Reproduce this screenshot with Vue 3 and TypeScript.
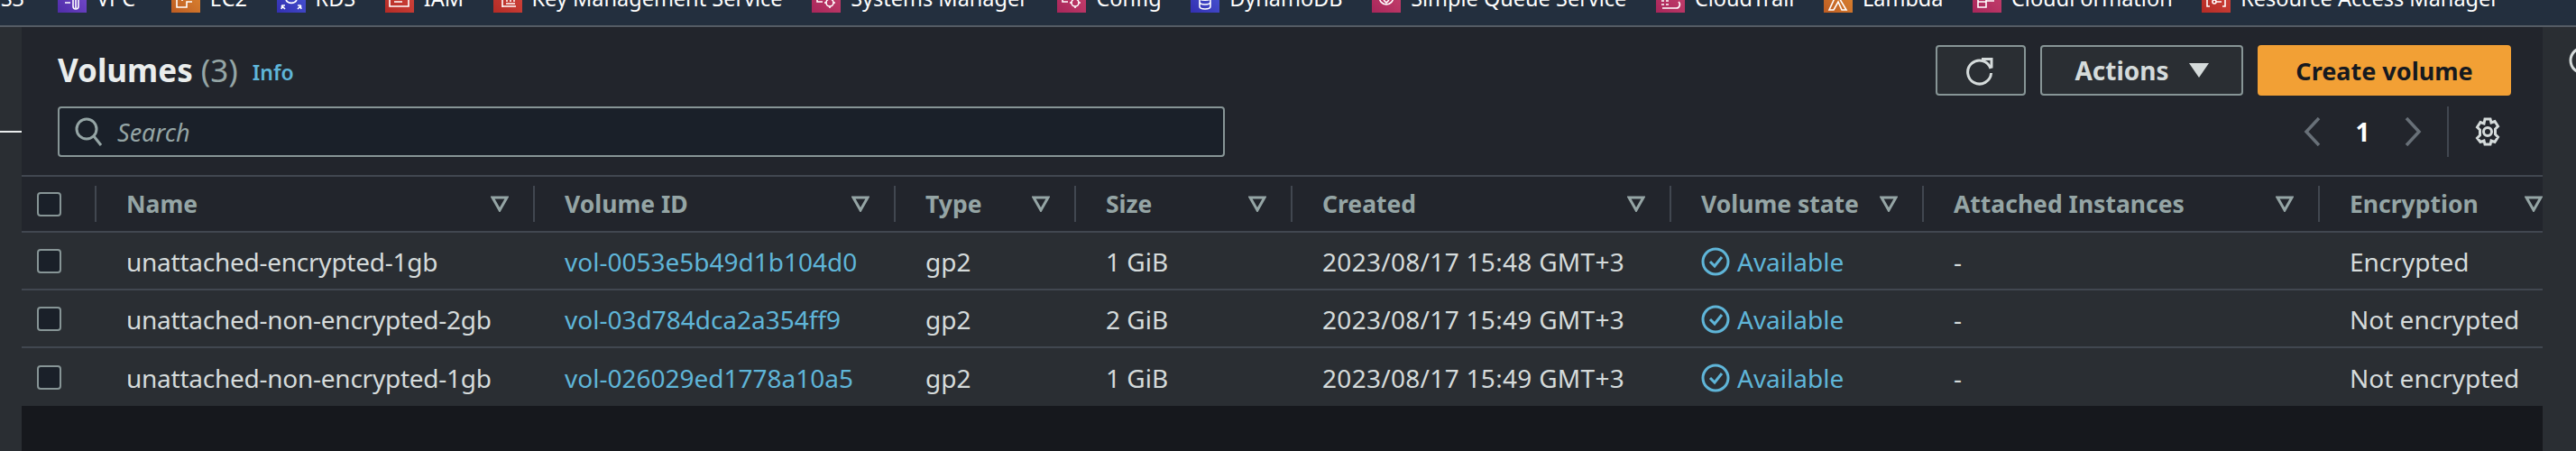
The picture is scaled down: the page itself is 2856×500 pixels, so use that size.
<script setup lang="ts">
interface Service {
  name: string
  color: string
  icon: string
}
interface Column {
  label: string
  width: number
}
interface Volume {
  name: string
  id: string
  type: string
  size: string
  created: string
  encryption: string
}

const purple = 'linear-gradient(45deg, #4f2ca8, #7a4fd0)'
const orange = 'linear-gradient(45deg, #bd5c22, #e08a32)'
const blue = 'linear-gradient(45deg, #332fb0, #4a5ad8)'
const red = 'linear-gradient(45deg, #b52b25, #d4483f)'
const pink = 'linear-gradient(45deg, #a8265a, #c9436f)'

// only the lower part of every tile shows under the top edge
const services: Service[] = [
  { name: 'VPC', color: purple, icon: 'M8 21h6M17 14v11a3 3 0 0 0 6 0V14M20 14v13' },
  { name: 'EC2', color: orange, icon: 'M6 14v12h11v-6h6M12 14v5M17 14v2' },
  { name: 'RDS', color: blue, icon: 'M5 24l4 4M5 28l1-4h3M27 24l-4 4M27 28l-1-4h-3M10 18a7 7 0 0 0 12 0' },
  { name: 'IAM', color: red, icon: 'M5 14v11h21V14M10 20h9' },
  { name: 'Key Management Service', color: red, icon: 'M10 14v12M10 25h15M14 19h2M18 19h2M22 19h2M14 22h10' },
  { name: 'Systems Manager', color: pink, icon: 'M6 14v6h6M16 21a4 4 0 1 0 8 0 4 4 0 1 0-8 0M20 15v2M20 25v2M14 21h2M24 21h2' },
  { name: 'Config', color: pink, icon: 'M6 14v6h6M16 21a4 4 0 1 0 8 0 4 4 0 1 0-8 0M20 15v2M20 25v2M14 21h2M24 21h2' },
  { name: 'DynamoDB', color: blue, icon: 'M10 14v11c0 4 12 4 12 0V14M10 20c0 4 12 4 12 0M10 16c0 3 12 3 12 0' },
  { name: 'Simple Queue Service', color: pink, icon: 'M8 14a8 9 0 0 0 16 0M13 18l3 3 3-3' },
  { name: 'CloudTrail', color: pink, icon: 'M6 19h3M11 19h3M6 23h3M11 23h3M7 27h15a4 4 0 0 0 3-7' },
  { name: 'Lambda', color: orange, icon: 'M13 14l-7 15h5l5-9 4 9h5L16 14' },
  { name: 'CloudFormation', color: pink, icon: 'M6 14v12h9V14M6 20h9M15 19h9M19 14h5' },
  { name: 'Resource Access Manager', color: red, icon: 'M6 14v11h3M26 14v11h-3M12 20a2 2 0 1 0 4 0 2 2 0 1 0-4 0M16 20h6' },
]

const columns: Column[] = [
  { label: 'Name', width: 486 },
  { label: 'Volume ID', width: 400 },
  { label: 'Type', width: 200 },
  { label: 'Size', width: 240 },
  { label: 'Created', width: 420 },
  { label: 'Volume state', width: 280 },
  { label: 'Attached Instances', width: 439 },
  { label: 'Encryption', width: 247 },
]

const gridColumns = `83px ${columns.map((c) => `${c.width}px`).join(' ')}`

const volumes: Volume[] = [
  { name: 'unattached-encrypted-1gb', id: 'vol-0053e5b49d1b104d0', type: 'gp2', size: '1 GiB', created: '2023/08/17 15:48 GMT+3', encryption: 'Encrypted' },
  { name: 'unattached-non-encrypted-2gb', id: 'vol-03d784dca2a354ff9', type: 'gp2', size: '2 GiB', created: '2023/08/17 15:49 GMT+3', encryption: 'Not encrypted' },
  { name: 'unattached-non-encrypted-1gb', id: 'vol-026029ed1778a10a5', type: 'gp2', size: '1 GiB', created: '2023/08/17 15:49 GMT+3', encryption: 'Not encrypted' },
]
</script>

<template>
  <div class="page">
    <nav class="topbar">
      <span class="service-name first">S3</span>
      <a v-for="s in services" :key="s.name" class="service">
        <span class="tile" :style="{ background: s.color }">
          <svg viewBox="0 0 32 32" width="32" height="32" fill="none" stroke="#fff" stroke-width="1.6">
            <path :d="s.icon" />
          </svg>
        </span>
        <span class="service-name">{{ s.name }}</span>
      </a>
    </nav>

    <div class="body">
      <aside class="strip">
        <span class="strip-mark"></span>
      </aside>

      <main class="main">
        <section class="panel">
          <header class="head">
            <div class="head-row">
              <h1 class="title">Volumes <span class="count">(3)</span></h1>
              <a class="info">Info</a>
              <div class="actions">
                <button class="btn refresh" aria-label="Refresh">
                  <svg viewBox="0 0 34 34" width="34" height="34" fill="none" stroke="#d5dbdb" stroke-width="3">
                    <path d="M28 15a13 13 0 1 0 .6 5" />
                    <path d="M18 4.500h11v10" />
                  </svg>
                </button>
                <button class="btn menu">
                  Actions
                  <svg viewBox="0 0 22 16" width="22" height="16"><path d="M0 0h22L11 16z" fill="#d5dbdb" /></svg>
                </button>
                <button class="btn primary">Create volume</button>
              </div>
            </div>
            <div class="head-row">
              <label class="search">
                <svg viewBox="0 0 32 34" width="32" height="34" fill="none" stroke="#95a5a5" stroke-width="3">
                  <circle cx="14" cy="14" r="11" />
                  <path d="M22 22l8 10" />
                </svg>
                <span class="placeholder">Search</span>
              </label>
              <div class="pager">
                <svg viewBox="0 0 20 32" width="20" height="32" fill="none" stroke="#687078" stroke-width="3.5">
                  <path d="M17 1L3 16l14 15" />
                </svg>
                <span class="page-num">1</span>
                <svg viewBox="0 0 20 32" width="20" height="32" fill="none" stroke="#687078" stroke-width="3.5">
                  <path d="M3 1l14 15L3 31" />
                </svg>
                <span class="pager-sep"></span>
                <svg class="gear" viewBox="0 0 32 32" width="32" height="32" fill="none" stroke="#d5dbdb" stroke-width="3">
                  <circle cx="16" cy="16" r="4.500" />
                  <path d="M13 2h6l1 4 4-1.500 3.500 5.500-3 3v6l3 3-3.500 5.500-4-1.500-1 4h-6l-1-4-4 1.500L4.500 23l3-3v-6l-3-3L8 5.500 12 7z" />
                </svg>
              </div>
            </div>
          </header>

          <div class="grid head-cells" :style="{ gridTemplateColumns: gridColumns }">
            <div class="cell check-cell"><span class="checkbox"></span></div>
            <div v-for="c in columns" :key="c.label" class="cell th">
              <span>{{ c.label }}</span>
              <svg viewBox="0 0 20 18" width="20" height="18" fill="none" stroke="#95a5a5" stroke-width="3">
                <path d="M2 2h16l-8 14z" />
              </svg>
            </div>
          </div>

          <div v-for="v in volumes" :key="v.id" class="grid row" :style="{ gridTemplateColumns: gridColumns }">
            <div class="cell check-cell"><span class="checkbox"></span></div>
            <div class="cell name">{{ v.name }}</div>
            <div class="cell link">{{ v.id }}</div>
            <div class="cell">{{ v.type }}</div>
            <div class="cell">{{ v.size }}</div>
            <div class="cell date">{{ v.created }}</div>
            <div class="cell link state">
              <svg viewBox="0 0 32 32" width="32" height="32" fill="none" stroke="#5fb5d8" stroke-width="3">
                <circle cx="16" cy="16" r="14" />
                <path d="M10 16l5 5 8-10" />
              </svg>
              Available
            </div>
            <div class="cell">-</div>
            <div class="cell">{{ v.encryption }}</div>
          </div>
        </section>
      </main>

      <aside class="strip right">
        <svg class="help" viewBox="0 0 32 32" width="32" height="32" fill="none" stroke="#d5dbdb" stroke-width="3">
          <circle cx="16" cy="16" r="14" />
        </svg>
      </aside>
    </div>
  </div>
</template>

<style>
html,
body {
  margin: 0;
  background: #16181d;
}
</style>

<style scoped>
.page {
  width: 2856px;
  height: 500px;
  overflow: hidden;
  display: flex;
  flex-direction: column;
  font-family: "Noto Sans", "Open Sans", sans-serif;
  font-size: 28px;
  color: #d5dbdb;
  background: #16181d;
}
.topbar {
  flex: none;
  height: 28px;
  box-sizing: border-box;
  padding: 0 0 14px 64px;
  display: flex;
  align-items: flex-end;
  gap: 32.500px;
  background: #232f3e;
  position: relative;
  overflow: hidden;
  white-space: nowrap;
  font-size: 23.500px;
}
.service {
  display: flex;
  align-items: center;
  gap: 11px;
  height: 32px;
  flex: none;
}
.service:first-of-type {
  margin-right: 7px;
}
.tile {
  flex: none;
  width: 32px;
  height: 32px;
  display: block;
}
.tile svg {
  display: block;
}
.service-name {
  color: #fff;
}
.service-name.first {
  position: absolute;
  right: calc(100% - 27px);
  bottom: 14px;
}
.body {
  flex: 1;
  display: flex;
  min-height: 0;
  border-top: 2px solid #545b64;
}
.strip {
  flex: none;
  width: 24px;
  background: #2a2e33;
  position: relative;
}
.strip-mark {
  position: absolute;
  left: 0;
  right: 0;
  top: 115px;
  height: 2px;
  background: #eaeded;
}
.strip.right {
  width: 37px;
}
.help {
  position: absolute;
  left: 29px;
  top: 21px;
}
.main {
  flex: 1;
  min-width: 0;
}
.panel {
  background: #22252c;
}
.head {
  padding: 20px 35px 20px 40px;
  display: flex;
  flex-direction: column;
  gap: 12px;
  border-bottom: 2px solid #414750;
}
.head-row {
  display: flex;
  align-items: center;
  height: 56px;
}
.title {
  margin: 0 0 2px;
  font-size: 35px;
  font-weight: 700;
  color: #eaeded;
}
.count {
  font-weight: 400;
  color: #95a5a5;
}
.info {
  margin: 4px 0 0 16px;
  font-size: 23px;
  font-weight: 600;
  color: #5fb5d8;
}
.actions {
  margin-left: auto;
  display: flex;
  gap: 16px;
}
.btn {
  box-sizing: border-box;
  height: 56px;
  display: flex;
  align-items: center;
  justify-content: center;
  border: 2px solid #879596;
  border-radius: 4px;
  background: #2a2e33;
  color: #d5dbdb;
  font: 700 27px "Noto Sans", "Open Sans", sans-serif;
  padding: 0;
}
.refresh {
  width: 100px;
}
.menu {
  width: 225px;
  gap: 22px;
  font-size: 28px;
}
.primary {
  width: 281px;
  border-color: #f2a035;
  background: #f2a035;
  color: #16191f;
}
.search {
  box-sizing: border-box;
  width: 1294px;
  height: 56px;
  display: flex;
  align-items: center;
  gap: 16px;
  padding-left: 16px;
  border: 2px solid #879596;
  border-radius: 4px;
  background: #1a2029;
  font-size: 27px;
}
.placeholder {
  font-style: italic;
  color: #95a5a5;
}
.pager {
  margin-left: auto;
  height: 56px;
  display: flex;
  align-items: center;
}
.page-num {
  width: 91px;
  text-align: center;
  color: #fff;
  font-weight: 700;
}
.pager-sep {
  width: 2px;
  height: 56px;
  margin-left: 28px;
  background: #414750;
}
.gear {
  margin: 0 10px 0 27px;
}
.grid {
  display: grid;
  overflow: hidden;
}
.head-cells {
  height: 60px;
}
.row {
  height: 62px;
  border-top: 2px solid #414750;
  background: #2a2e33;
}
.row:last-child {
  height: 64px;
}
.row .cell {
  padding-top: 2px;
}
.row .check-cell {
  padding-top: 0;
}
.cell {
  display: flex;
  align-items: center;
  padding-left: 33px;
  white-space: nowrap;
  min-width: 0;
}
.cell.check-cell {
  padding-left: 17px;
}
.name {
  letter-spacing: -0.250px;
}
.date {
  letter-spacing: 0.300px;
}
.checkbox {
  box-sizing: border-box;
  width: 27px;
  height: 27px;
  border: 2px solid #879596;
  border-radius: 4px;
  background: #1a2029;
}
.th {
  justify-content: space-between;
  font-size: 26.500px;
  font-weight: 700;
  color: #95a5a5;
  padding-right: 29px;
}
.head-cells .cell {
  position: relative;
}
.head-cells .cell::after {
  content: "";
  position: absolute;
  right: 0;
  top: 10px;
  bottom: 10px;
  width: 2px;
  background: #414750;
}
.head-cells .cell:last-child::after {
  display: none;
}
.head-cells .cell:last-child {
  padding-right: 0;
}
.link {
  color: #5fb5d8;
}
.state {
  gap: 8px;
}
</style>
